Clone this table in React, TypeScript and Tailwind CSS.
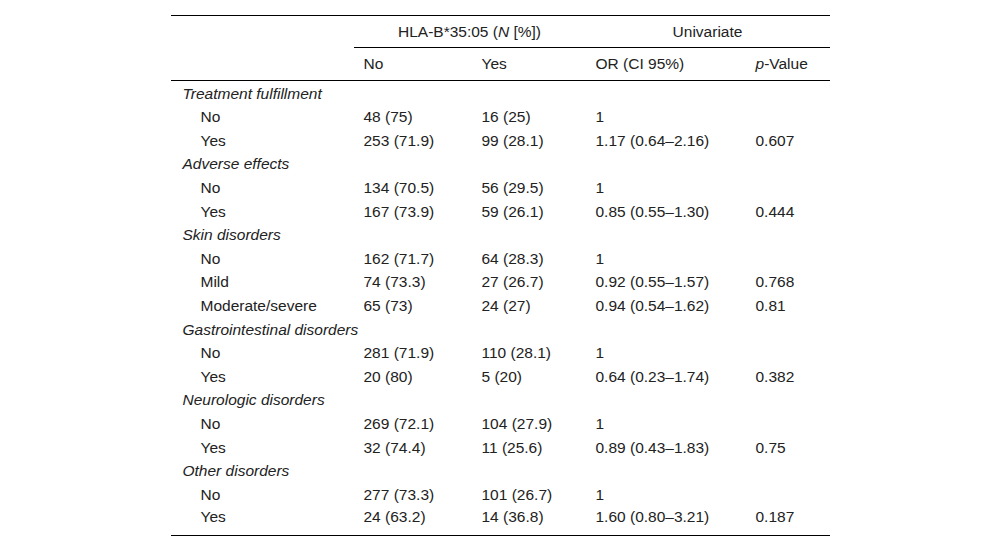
import React from 'react';

interface Row {
  label: string;
  no: string;
  yes: string;
  or: string;
  p: string;
}

interface Group {
  title: string;
  rows: Row[];
}

const groups: Group[] = [
  {
    title: 'Treatment fulfillment',
    rows: [
      { label: 'No', no: '48 (75)', yes: '16 (25)', or: '1', p: '' },
      { label: 'Yes', no: '253 (71.9)', yes: '99 (28.1)', or: '1.17 (0.64–2.16)', p: '0.607' },
    ],
  },
  {
    title: 'Adverse effects',
    rows: [
      { label: 'No', no: '134 (70.5)', yes: '56 (29.5)', or: '1', p: '' },
      { label: 'Yes', no: '167 (73.9)', yes: '59 (26.1)', or: '0.85 (0.55–1.30)', p: '0.444' },
    ],
  },
  {
    title: 'Skin disorders',
    rows: [
      { label: 'No', no: '162 (71.7)', yes: '64 (28.3)', or: '1', p: '' },
      { label: 'Mild', no: '74 (73.3)', yes: '27 (26.7)', or: '0.92 (0.55–1.57)', p: '0.768' },
      { label: 'Moderate/severe', no: '65 (73)', yes: '24 (27)', or: '0.94 (0.54–1.62)', p: '0.81' },
    ],
  },
  {
    title: 'Gastrointestinal disorders',
    rows: [
      { label: 'No', no: '281 (71.9)', yes: '110 (28.1)', or: '1', p: '' },
      { label: 'Yes', no: '20 (80)', yes: '5 (20)', or: '0.64 (0.23–1.74)', p: '0.382' },
    ],
  },
  {
    title: 'Neurologic disorders',
    rows: [
      { label: 'No', no: '269 (72.1)', yes: '104 (27.9)', or: '1', p: '' },
      { label: 'Yes', no: '32 (74.4)', yes: '11 (25.6)', or: '0.89 (0.43–1.83)', p: '0.75' },
    ],
  },
  {
    title: 'Other disorders',
    rows: [
      { label: 'No', no: '277 (73.3)', yes: '101 (26.7)', or: '1', p: '' },
      { label: 'Yes', no: '24 (63.2)', yes: '14 (36.8)', or: '1.60 (0.80–3.21)', p: '0.187' },
    ],
  },
];

const cell = 'pl-[10px] h-[23.6px] p-0 align-middle leading-[20px]';

export default function App() {
  return (
    <div
      className="w-[1000px] h-[550px] bg-white flex justify-center pt-[15px] text-[15.5px] text-[#222]"
      style={{ fontFamily: '"Liberation Sans", Arial, sans-serif' }}
    >
      <div className="w-[659px]">
        <table className="w-[659px] table-fixed border-collapse border-t border-b border-black">
          <colgroup>
            <col className="w-[183px]" />
            <col className="w-[118px]" />
            <col className="w-[114px]" />
            <col className="w-[160px]" />
            <col className="w-[84px]" />
          </colgroup>
          <thead>
            <tr className="h-[32px]">
              <th className="p-0"></th>
              <th colSpan={2} className="p-0 font-normal text-center border-b border-black">
                HLA-B*35:05 (<i>N</i> [%])
              </th>
              <th colSpan={2} className="p-0 font-normal text-center border-b border-black">
                Univariate
              </th>
            </tr>
            <tr className="h-[33px] border-b border-black">
              <th className="p-0"></th>
              <th className="pl-[10px] p-0 font-normal text-left">No</th>
              <th className="pl-[10px] p-0 font-normal text-left">Yes</th>
              <th className="pl-[10px] p-0 font-normal text-left">OR (CI 95%)</th>
              <th className="pl-[10px] p-0 font-normal text-left">
                <i>p</i>-Value
              </th>
            </tr>
          </thead>
          <tbody>
            {groups.map((g, gi) => (
              <React.Fragment key={g.title}>
                <tr>
                  <td
                    colSpan={5}
                    className={
                      gi === 0
                        ? 'pl-[12px] pt-[2px] h-[25px] p-0 italic leading-[20px]'
                        : 'pl-[12px] h-[23.6px] p-0 italic leading-[20px]'
                    }
                  >
                    {g.title}
                  </td>
                </tr>
                {g.rows.map((r, ri) => {
                  const last = gi === groups.length - 1 && ri === g.rows.length - 1;
                  const c = last ? cell + ' pb-[8px]' : cell;
                  return (
                    <tr key={ri}>
                      <td className={c + ' pl-[30px]'}>{r.label}</td>
                      <td className={c}>{r.no}</td>
                      <td className={c}>{r.yes}</td>
                      <td className={c}>{r.or}</td>
                      <td className={c}>{r.p}</td>
                    </tr>
                  );
                })}
              </React.Fragment>
            ))}
          </tbody>
        </table>
      </div>
    </div>
  );
}
